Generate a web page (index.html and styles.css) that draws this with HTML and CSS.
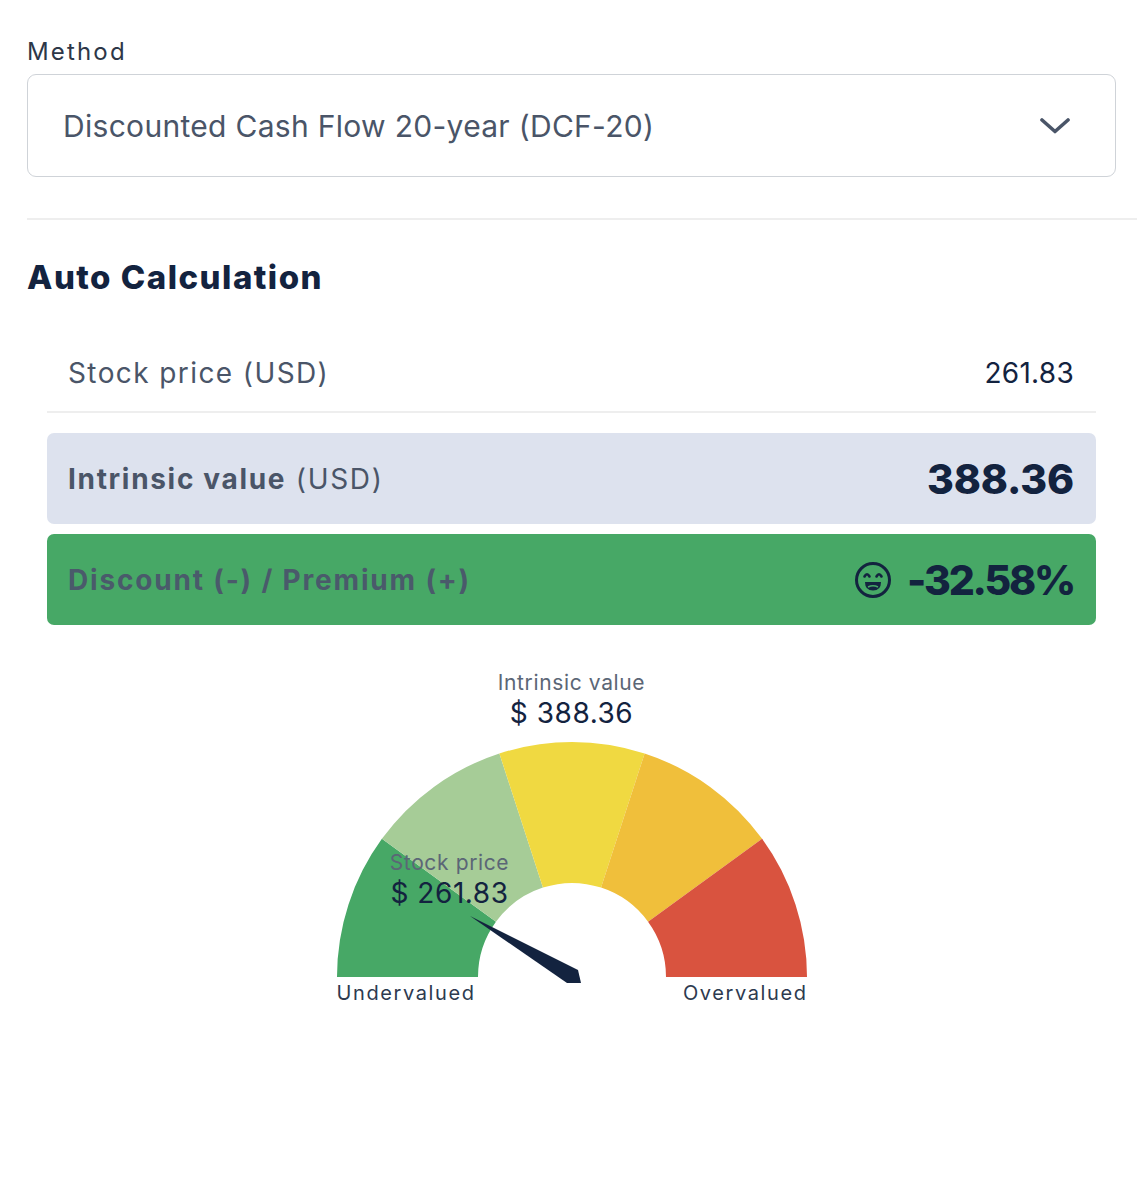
FILE: index.html
```html
<!DOCTYPE html>
<html>
<head>
<meta charset="utf-8">
<link rel="stylesheet" href="styles.css">
</head>
<body>
<div class="page">
  <div class="field-label">Method</div>
  <div class="select">
    <span class="select-text">Discounted Cash Flow 20-year (DCF-20)</span>
    <svg class="chevron" width="30" height="16" viewBox="0 0 30 16"><path d="M2 2 L15 13.5 L28 2" fill="none" stroke="#4a5568" stroke-width="3.6" stroke-linecap="round" stroke-linejoin="round"/></svg>
  </div>
  <div class="divider"></div>
  <h2 class="heading">Auto Calculation</h2>
  <div class="panel">
    <div class="row row-stock">
      <span class="row-label">Stock price (USD)</span>
      <span class="row-value">261.83</span>
    </div>
    <div class="row box box-intrinsic">
      <span class="row-label"><b>Intrinsic value</b> (USD)</span>
      <span class="big-value">388.36</span>
    </div>
    <div class="row box box-discount">
      <span class="row-label"><b>Discount (-) / Premium (+)</b></span>
      <span class="discount-value">
        <svg class="face" width="38" height="38" viewBox="0 0 38 38">
          <circle cx="19" cy="19" r="16.5" fill="none" stroke="#13233f" stroke-width="3"/>
          <path d="M10.5 15.5 Q13 11 15.5 15.5" fill="none" stroke="#13233f" stroke-width="2.6" stroke-linecap="round"/>
          <path d="M22.5 15.5 Q25 11 27.5 15.5" fill="none" stroke="#13233f" stroke-width="2.6" stroke-linecap="round"/>
          <path d="M11 21 L27 21 Q27 29.5 19 29.5 Q11 29.5 11 21 Z" fill="#13233f"/>
          <path d="M14 26 Q19 23.5 24 26" fill="none" stroke="#47a866" stroke-width="1.4"/>
        </svg>
        <span class="big-value pct">-32.58%</span>
      </span>
    </div>
  </div>
  <div class="gauge">
    <div class="g-title">Intrinsic value</div>
    <div class="g-amount">$ 388.36</div>
    <div class="g-chart">
      <svg class="g-svg" width="472" height="235" viewBox="0 0 472 235">
        <path d="M1 235 A235 235 0 0 1 45.88 96.87 L159.95 179.75 A94 94 0 0 0 142 235 Z" fill="#47a866"/>
        <path d="M45.88 96.87 A235 235 0 0 1 163.38 11.5 L206.95 145.6 A94 94 0 0 0 159.95 179.75 Z" fill="#a6cc97"/>
        <path d="M163.38 11.5 A235 235 0 0 1 308.62 11.5 L265.05 145.6 A94 94 0 0 0 206.95 145.6 Z" fill="#f0d941"/>
        <path d="M308.62 11.5 A235 235 0 0 1 426.12 96.87 L312.05 179.75 A94 94 0 0 0 265.05 145.6 Z" fill="#f0bf3b"/>
        <path d="M426.12 96.87 A235 235 0 0 1 471 235 L330 235 A94 94 0 0 0 312.05 179.75 Z" fill="#d9533f"/>
        <polygon points="134,174 242,228 245,241 231,241" fill="#13233f"/>
      </svg>
      <div class="g-stock">
        <div class="g-stock-title">Stock price</div>
        <div class="g-stock-amount">$ 261.83</div>
      </div>
    </div>
    <div class="g-ends">
      <span>Undervalued</span>
      <span>Overvalued</span>
    </div>
  </div>
</div>
</body>
</html>
```

FILE: styles.css
```css
* { box-sizing: border-box; }
html, body { margin: 0; padding: 0; background: #ffffff; }
body { font-family: Inter, "Open Sans", sans-serif; color: #13233f; }

.page { padding: 0 21px 60px 27px; }

.field-label {
  margin-top: 37px;
  font-size: 24px;
  line-height: 30px;
  color: #2d3748;
  letter-spacing: 0.09em;
}

.select {
  margin-top: 7px;
  height: 103px;
  border: 1.5px solid #cfd3d8;
  border-radius: 9px;
  display: flex;
  align-items: center;
  justify-content: space-between;
  padding: 0 45px 0 35px;
}
.select-text {
  font-size: 30px;
  color: #4a5568;
  letter-spacing: 0.01em;
}
.chevron { display: block; }

.divider {
  margin-top: 41px;
  height: 2px;
  background: #eeeeee;
  margin-right: -21px;
}

.heading {
  margin: 37px 0 0 0;
  font-size: 33px;
  line-height: 40px;
  font-weight: 800;
  color: #13233f;
  letter-spacing: 0.045em;
}

.panel { margin: 38px 20px 0 20px; }

.row {
  display: flex;
  align-items: center;
  justify-content: space-between;
  padding: 0 22px 0 21px;
}
.row-stock {
  height: 78px;
  border-bottom: 2px solid #eeeeee;
}
.row-label {
  font-size: 28px;
  color: #4a5568;
  letter-spacing: 0.05em;
}
.box-intrinsic .row-label { letter-spacing: 0.06em; }
.row-label b { font-weight: 700; }
.row-value {
  font-size: 28px;
  color: #13233f;
  letter-spacing: 0.01em;
}
.box {
  height: 91px;
  border-radius: 7px;
}
.box-intrinsic { margin-top: 20px; background: #dde2ee; }
.box-discount { margin-top: 10px; background: #47a866; }
.box-discount .row-label { color: #4a5a6b; letter-spacing: 0.065em; }
.big-value {
  font-size: 41px;
  font-weight: 800;
  color: #13233f;
  letter-spacing: -0.005em;
}
.big-value.pct { letter-spacing: -0.055em; }
.discount-value { display: flex; align-items: center; gap: 15px; }
.face { display: block; }

.gauge {
  width: 472px;
  margin: 45px auto 0 auto;
  text-align: center;
}
.g-title {
  font-size: 21px;
  line-height: 26px;
  color: #5b6676;
  letter-spacing: 0.03em;
}
.g-amount {
  margin-top: 1px;
  font-size: 28px;
  line-height: 32px;
  color: #13233f;
  letter-spacing: 0.02em;
}
.g-chart {
  position: relative;
  margin-top: 13px;
  height: 235px;
}
.g-svg { display: block; overflow: visible; }
.g-stock {
  position: absolute;
  left: 54px;
  top: 108px;
  width: 120px;
  text-align: center;
}
.g-stock-title {
  font-size: 21px;
  line-height: 26px;
  color: #5b6676;
  letter-spacing: 0.03em;
}
.g-stock-amount {
  margin-top: 1px;
  font-size: 28px;
  line-height: 32px;
  color: #13233f;
  letter-spacing: 0.02em;
}
.g-ends {
  margin-top: 4px;
  display: flex;
  justify-content: space-between;
  padding-left: 1px;
  font-size: 20px;
  line-height: 24px;
  color: #2d3a4f;
  letter-spacing: 0.08em;
}
```
